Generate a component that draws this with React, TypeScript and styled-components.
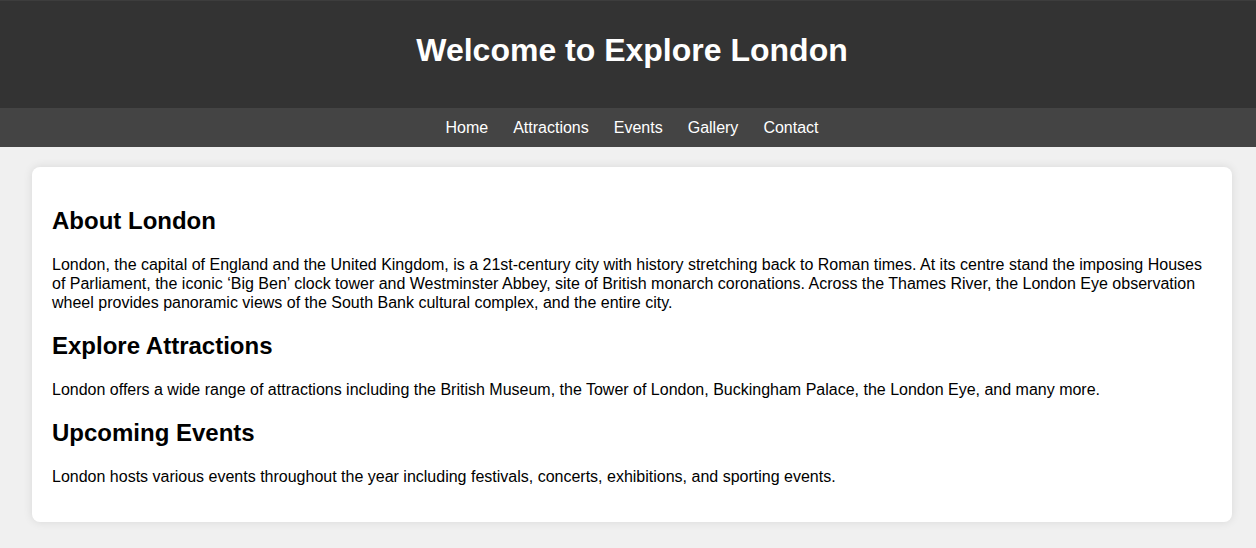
import React from "react";
import styled, { createGlobalStyle } from "styled-components";

const Global = createGlobalStyle`
  html, body { margin: 0; padding: 0; overflow: hidden; }
  body {
    background: #f0f0f0;
    font-family: "Liberation Sans", Arial, sans-serif;
    color: #000;
  }
`;

const Page = styled.div`
  width: 1264px;
`;

const Header = styled.header`
  background: #333;
  color: #fff;
  text-align: center;
  border-top: 1px solid #3d3d3d;
  padding: 31px 0 39px;
`;

const Title = styled.h1`
  margin: 0;
  font-size: 32px;
  line-height: 37px;
  font-weight: bold;
`;

const Nav = styled.nav`
  background: #444;
  display: flex;
  justify-content: center;
  gap: 25px;
  padding: 10px 0;
`;

const NavLink = styled.a`
  color: #fff;
  text-decoration: none;
  font-size: 16px;
  line-height: 19px;
`;

const Card = styled.main`
  width: 1200px;
  box-sizing: border-box;
  margin: 20px auto;
  padding: 20px;
  background: #fff;
  border-radius: 8px;
  box-shadow: 0 0 10px rgba(0, 0, 0, 0.1);
  overflow: hidden;
`;

const Heading = styled.h2`
  font-size: 24px;
  line-height: 28px;
  font-weight: bold;
  margin: 20px 0;
`;

const Text = styled.p`
  font-size: 16px;
  line-height: 19px;
  margin: 16px 0;
`;

export default function App() {
  return (
    <Page>
      <Global />
      <Header>
        <Title>Welcome to Explore London</Title>
      </Header>
      <Nav>
        <NavLink href="#">Home</NavLink>
        <NavLink href="#">Attractions</NavLink>
        <NavLink href="#">Events</NavLink>
        <NavLink href="#">Gallery</NavLink>
        <NavLink href="#">Contact</NavLink>
      </Nav>
      <Card>
        <Heading>About London</Heading>
        <Text>
          London, the capital of England and the United Kingdom, is a 21st-century city with history stretching back to Roman times. At its centre stand the imposing Houses of Parliament, the iconic ‘Big Ben’ clock tower and Westminster Abbey, site of British monarch coronations. Across the Thames River, the London Eye observation wheel provides panoramic views of the South Bank cultural complex, and the entire city.
        </Text>
        <Heading>Explore Attractions</Heading>
        <Text>
          London offers a wide range of attractions including the British Museum, the Tower of London, Buckingham Palace, the London Eye, and many more.
        </Text>
        <Heading>Upcoming Events</Heading>
        <Text>
          London hosts various events throughout the year including festivals, concerts, exhibitions, and sporting events.
        </Text>
      </Card>
    </Page>
  );
}
